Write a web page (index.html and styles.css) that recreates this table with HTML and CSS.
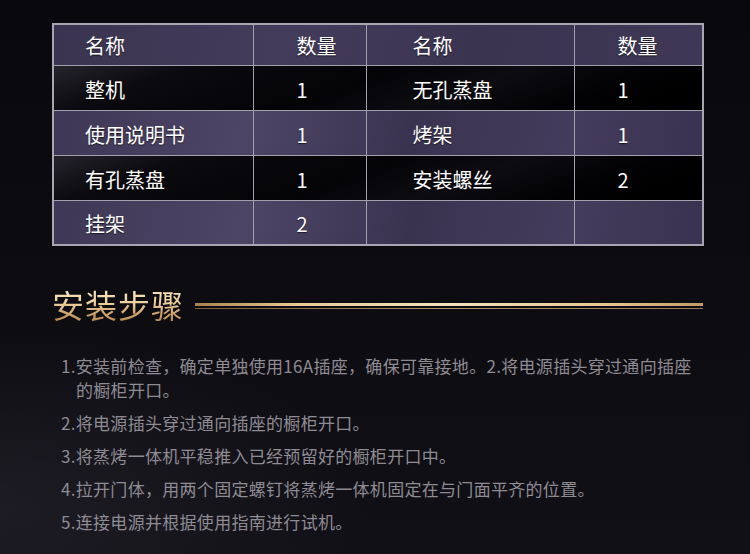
FILE: index.html
```html
<!DOCTYPE html>
<html lang="zh-CN">
<head>
<meta charset="utf-8">
<title>安装步骤</title>
<link rel="stylesheet" href="styles.css">
</head>
<body>
<main class="page">
  <table class="parts">
    <colgroup>
      <col class="c-name1"><col class="c-qty1"><col class="c-name2"><col class="c-qty2">
    </colgroup>
    <thead>
      <tr class="row-head">
        <th class="name1">名称</th><th class="qty">数量</th><th class="name2">名称</th><th class="qty">数量</th>
      </tr>
    </thead>
    <tbody>
      <tr class="row-dark">
        <td class="name1">整机</td><td class="qty">1</td><td class="name2">无孔蒸盘</td><td class="qty">1</td>
      </tr>
      <tr class="row-light">
        <td class="name1">使用说明书</td><td class="qty">1</td><td class="name2">烤架</td><td class="qty">1</td>
      </tr>
      <tr class="row-dark">
        <td class="name1">有孔蒸盘</td><td class="qty">1</td><td class="name2">安装螺丝</td><td class="qty">2</td>
      </tr>
      <tr class="row-light">
        <td class="name1">挂架</td><td class="qty">2</td><td class="name2"></td><td class="qty"></td>
      </tr>
    </tbody>
  </table>

  <section class="steps">
    <div class="steps-head">
      <h2 class="steps-title">安装步骤</h2>
      <div class="steps-rule"></div>
    </div>
    <ol class="steps-list">
      <li>1.安装前检查，确定单独使用16A插座，确保可靠接地。2.将电源插头穿过通向插座的橱柜开口。</li>
      <li>2.将电源插头穿过通向插座的橱柜开口。</li>
      <li>3.将蒸烤一体机平稳推入已经预留好的橱柜开口中。</li>
      <li>4.拉开门体，用两个固定螺钉将蒸烤一体机固定在与门面平齐的位置。</li>
      <li>5.连接电源并根据使用指南进行试机。</li>
    </ol>
  </section>
</main>
</body>
</html>
```
FILE: styles.css
```css
html, body {
  margin: 0;
  padding: 0;
}
body {
  width: 750px;
  height: 554px;
  overflow: hidden;
  font-family: "Noto Sans CJK SC", "Noto Sans", sans-serif;
  background:
    radial-gradient(ellipse 520px 260px at 0% 92%, rgba(40, 39, 48, 0.55), rgba(40, 39, 48, 0) 70%),
    linear-gradient(180deg, #09080c 0%, #0c0b10 45%, #111016 100%);
}
.page {
  padding: 23px 0 0 52px;
}

/* ---------- table ---------- */
.parts {
  width: 650px;
  table-layout: fixed;
  border-collapse: collapse;
  border: 2px solid #a8a4b0;
  color: #ffffff;
  font-size: 20px;
  text-shadow: 0 1px 1px rgba(0, 0, 0, 0.6);
}
.c-name1 { width: 200px; }
.c-qty1 { width: 113px; }
.c-name2 { width: 208px; }
.c-qty2 { width: 129px; }

.parts th,
.parts td {
  border: 1.5px solid #a39fac;
  font-weight: normal;
  text-align: left;
  padding: 0;
  line-height: 24px;
  vertical-align: middle;
}
.parts .name1 { padding-left: 31px; }
.parts .name2 { padding-left: 46px; }
.parts .qty { padding-left: 43px; }

.row-head { height: 41px; }
.row-head th { padding-top: 3px; }
.row-dark,
.row-light { height: 45px; }
.parts td { padding-top: 4px; }

.row-head {
  background: linear-gradient(100deg, #3a3450 0%, #433c5b 35%, #3a3451 65%, #3e3856 100%);
}
.row-light {
  background: linear-gradient(100deg, #3e3755 0%, #4c4566 30%, #3a3350 55%, #433c5c 80%, #393250 100%);
}
.row-dark {
  background: linear-gradient(160deg, #26242d 0%, #0b0a0e 18%, #040306 45%, #0d0c11 62%, #020103 80%, #000000 100%);
}

/* ---------- steps ---------- */
.steps {
  padding-right: 47px;
}
.steps-head {
  display: flex;
  align-items: center;
  margin-top: 38px;
  height: 40px;
}
.steps-title {
  margin: 0;
  font-size: 32px;
  font-weight: normal;
  line-height: 40px;
  letter-spacing: 1px;
  background: linear-gradient(180deg, #fdeccc 0%, #f0d3a2 45%, #cfa26a 75%, #b3834f 100%);
  -webkit-background-clip: text;
  background-clip: text;
  color: transparent;
}
.steps-rule {
  flex: 1;
  margin-left: 11px;
  margin-top: 4px;
  height: 6px;
  background-image:
    linear-gradient(90deg, #a9804d 0%, #e8c995 20%, #f6e2bb 50%, #e7c792 80%, #c49a66 100%),
    linear-gradient(90deg, #7a5c3a 0%, #b49268 50%, #9a7a55 100%);
  background-size: 100% 3px, 100% 1px;
  background-position: 0 0, 0 100%;
  background-repeat: no-repeat;
}
.steps-list {
  list-style: none;
  margin: 30px 0 0 9px;
  padding: 0 0 0 15px;
  color: #8e8b93;
  font-size: 17px;
  line-height: 24px;
  letter-spacing: 0.3px;
}
.steps-list li {
  text-indent: -15px;
  margin-bottom: 9px;
}
```
